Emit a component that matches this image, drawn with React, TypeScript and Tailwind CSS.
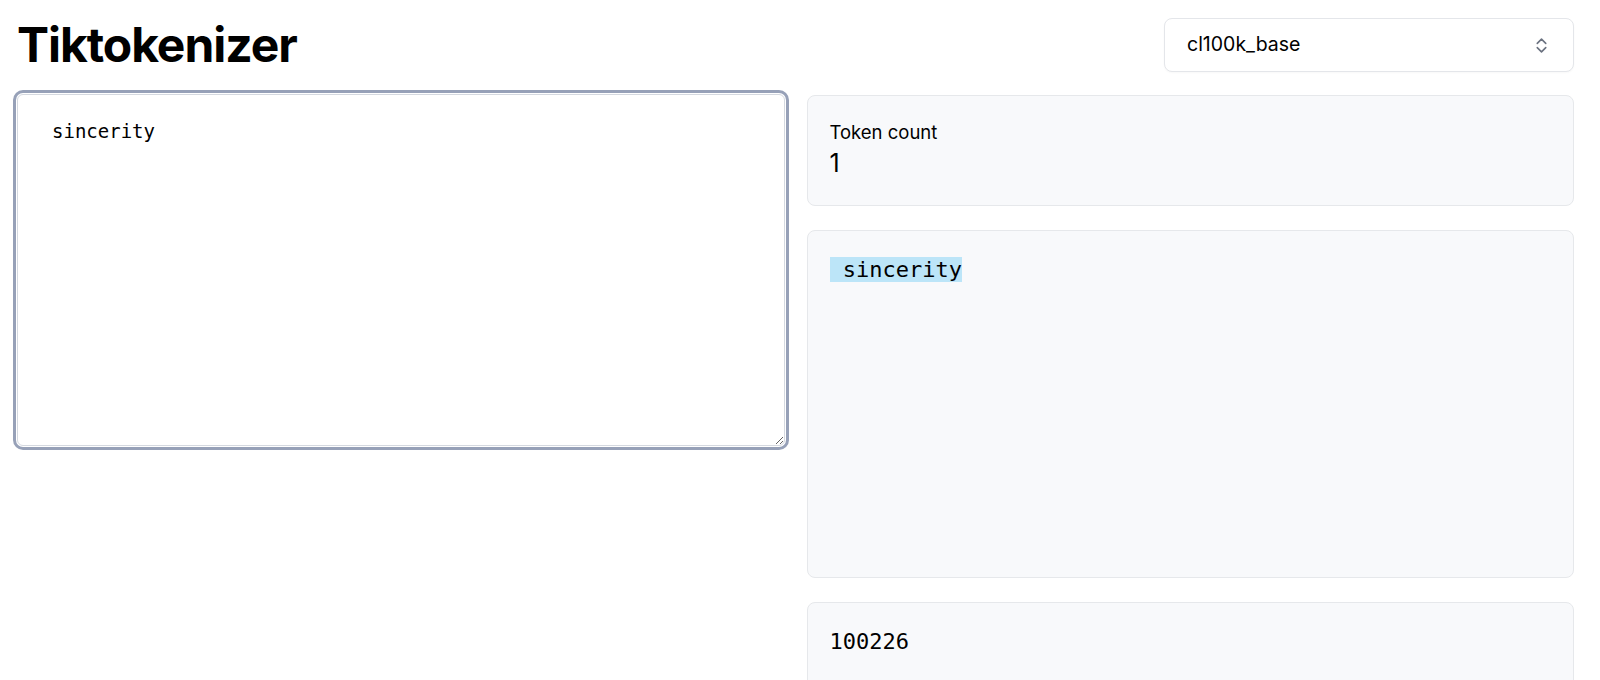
import { useState } from 'react';

const mono = { fontFamily: '"DejaVu Sans Mono", "Liberation Mono", monospace' };

function UpDownIcon() {
  return (
    <svg width="13" height="17" viewBox="0 0 12 16" fill="none" stroke="#6b7280" strokeWidth="1.5" strokeLinecap="round" strokeLinejoin="round">
      <path d="M2 6 L6 2 L10 6" />
      <path d="M2 10 L6 14 L10 10" />
    </svg>
  );
}

export default function App() {
  const [text, setText] = useState('sincerity');
  const tokens = [{ text: ' sincerity', id: 100226 }];

  return (
    <div className="h-[680px] overflow-hidden bg-white pl-[17px] pr-[26px] pt-[18px] text-black font-['Inter',sans-serif]">
      <div className="flex h-[54px] items-center justify-between">
        <h1 className="text-[48px] font-bold leading-none tracking-[-0.022em]">Tiktokenizer</h1>
        <button
          type="button"
          className="flex h-[54px] w-[410px] items-center justify-between rounded-lg border border-[#e4e6ea] bg-white pl-[22px] pr-[25px] text-[19.5px] shadow-[0_1px_2px_rgba(0,0,0,0.03)]"
        >
          <span>cl100k_base</span>
          <UpDownIcon />
        </button>
      </div>

      <div className="mt-[22px] grid grid-cols-2 gap-[22px]">
        <div>
          <textarea
            value={text}
            onChange={(e) => setText(e.target.value)}
            spellCheck={false}
            style={mono}
            className="block h-[352px] w-full rounded-md border border-[#d5d9e0] bg-white pl-[34px] pr-4 pt-[22px] text-[19px] leading-[1.5] outline-none ring-[3px] ring-[#97a1b8] ring-offset-[1px]"
          />
        </div>

        <div className="mt-[1px] flex flex-col gap-6">
          <div className="rounded-lg border border-[#e6e8eb] bg-[#f8f9fb] px-[22px] pt-[23px] pb-[26px]">
            <div className="text-[18.5px] leading-[26px]">Token count</div>
            <div className="mt-[2px] text-[25px] leading-8">{tokens.length}</div>
          </div>

          <div className="h-[348px] rounded-lg border border-[#e6e8eb] bg-[#f8f9fb] p-[22px]">
            <pre style={mono} className="whitespace-pre-wrap text-[22px] leading-[1.5]">
              {tokens.map((t, i) => (
                <span key={i} className="bg-[#bce5f8]">
                  {t.text}
                </span>
              ))}
            </pre>
          </div>

          <div className="h-[120px] rounded-lg border border-[#e6e8eb] bg-[#f8f9fb] p-[22px]">
            <pre style={mono} className="text-[22px] leading-[1.5]">
              {tokens.map((t) => t.id).join(', ')}
            </pre>
          </div>
        </div>
      </div>
    </div>
  );
}
